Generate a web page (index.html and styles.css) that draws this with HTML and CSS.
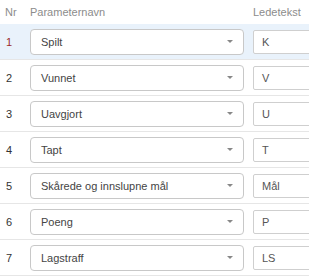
FILE: index.html
```html
<!DOCTYPE html>
<html lang="no">

<head>
	<meta charset="UTF-8">
	<meta name="viewport" content="width=device-width, initial-scale=1.0">
	<title>Parametere</title>
	<link rel="stylesheet" href="styles.css">
</head>

<body>
	<div class="param-table">
		<div class="param-row head">
			<div class="cell nr">Nr</div>
			<div class="cell">Parameternavn</div>
			<div class="cell led">Ledetekst</div>
		</div>
		<div class="param-row active">
			<div class="cell nr">1</div>
			<div class="cell"><div class="select"><span>Spilt</span><b class="caret"></b></div></div>
			<div class="cell led"><div class="input">K</div></div>
		</div>
		<div class="param-row">
			<div class="cell nr">2</div>
			<div class="cell"><div class="select"><span>Vunnet</span><b class="caret"></b></div></div>
			<div class="cell led"><div class="input">V</div></div>
		</div>
		<div class="param-row">
			<div class="cell nr">3</div>
			<div class="cell"><div class="select"><span>Uavgjort</span><b class="caret"></b></div></div>
			<div class="cell led"><div class="input">U</div></div>
		</div>
		<div class="param-row">
			<div class="cell nr">4</div>
			<div class="cell"><div class="select"><span>Tapt</span><b class="caret"></b></div></div>
			<div class="cell led"><div class="input">T</div></div>
		</div>
		<div class="param-row">
			<div class="cell nr">5</div>
			<div class="cell"><div class="select"><span>Skårede og innslupne mål</span><b class="caret"></b></div></div>
			<div class="cell led"><div class="input">Mål</div></div>
		</div>
		<div class="param-row">
			<div class="cell nr">6</div>
			<div class="cell"><div class="select"><span>Poeng</span><b class="caret"></b></div></div>
			<div class="cell led"><div class="input">P</div></div>
		</div>
		<div class="param-row">
			<div class="cell nr">7</div>
			<div class="cell"><div class="select"><span>Lagstraff</span><b class="caret"></b></div></div>
			<div class="cell led"><div class="input">LS</div></div>
		</div>
	</div>
</body>

</html>
```

FILE: styles.css
```css
body {
	margin: 0;
	background: #fff;
	font-family: "Liberation Sans", Arial, sans-serif;
	font-size: 11px;
	color: #333;
}

.param-table {
	width: 309px;
	overflow: hidden;
}

.param-row {
	display: grid;
	grid-template-columns: 25px 224px 1fr;
	align-items: center;
	height: 36px;
	box-sizing: border-box;
	border-bottom: 1px solid #e6e6e6;
}

.param-row.head {
	height: 24px;
	border-bottom: none;
	color: #8c8c8c;
}

.param-row.active {
	background: #e9f2fb;
}

.param-row.active .nr {
	color: #9b2b2b;
}

.cell {
	padding: 0 5px;
}

.param-row:not(.head) .cell.nr {
	padding-left: 6px;
}

.cell.led {
	padding: 0 0 0 4px;
	min-width: 0;
}

.select {
	display: flex;
	align-items: center;
	justify-content: space-between;
	height: 26px;
	box-sizing: border-box;
	border: 1px solid #c8c8c8;
	border-radius: 4px;
	background: #fff;
	padding: 0 10px;
	color: #444;
}

.caret {
	width: 0;
	height: 0;
	border-style: solid;
	border-width: 3px 3px 0 3px;
	border-color: #888 transparent transparent transparent;
}

.input {
	display: flex;
	align-items: center;
	width: 80px;
	height: 24px;
	box-sizing: border-box;
	border: 1px solid #cfcfcf;
	border-radius: 2px;
	background: #fff;
	padding: 0 8px;
	color: #555;
}
```
